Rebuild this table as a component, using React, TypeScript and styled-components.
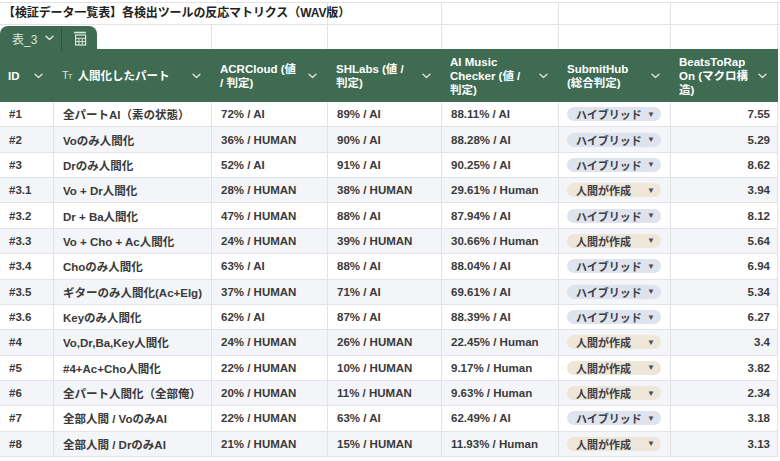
import React from "react";
import styled, { createGlobalStyle } from "styled-components";

const GlobalStyle = createGlobalStyle`
  html, body {
    margin: 0;
    padding: 0;
    background: #ffffff;
    overflow: hidden;
  }
  body {
    font-family: "Liberation Sans", "Noto Sans CJK JP", sans-serif;
    -webkit-font-smoothing: antialiased;
  }
`;

const COLS = "54px 158px 116px 114px 117px 112px 107px";
const GREEN = "#3e6b52";
const GRID = "#e1e3e6";

const Sheet = styled.div`
  width: 780px;
  padding-top: 2px;
`;

const PlainRow = styled.div<{ $h: number }>`
  display: grid;
  grid-template-columns: ${COLS};
  height: ${(p) => p.$h}px;
  border-top: 1px solid ${GRID};
  box-sizing: border-box;
`;

const PlainCell = styled.div<{ $span?: number }>`
  grid-column: span ${(p) => p.$span ?? 1};
  border-right: 1px solid ${GRID};
  position: relative;
  display: flex;
  align-items: flex-end;
`;

const Title = styled.div`
  font-size: 12px;
  font-weight: 700;
  color: #222;
  white-space: nowrap;
  padding: 0 0 5px 3px;
  letter-spacing: -0.1px;
`;

const Tab = styled.div`
  display: flex;
  align-items: center;
  height: 24px;
  width: 97px;
  background: ${GREEN};
  border-radius: 8px 8px 0 0;
  margin-bottom: -1px;
  color: #dbe6df;
`;

const TabName = styled.div`
  display: flex;
  align-items: center;
  gap: 8px;
  width: 62px;
  padding-left: 12px;
  box-sizing: border-box;
  height: 100%;
  border-right: 1px solid #2f5540;
  font-size: 12px;
  font-weight: 400;
`;

const TabIcon = styled.div`
  flex: 1;
  display: flex;
  justify-content: center;
  align-items: center;
`;

const Table = styled.div`
  display: grid;
  grid-template-columns: ${COLS};
`;

const HeadCell = styled.div`
  background: ${GREEN};
  height: 53px;
  display: flex;
  align-items: center;
  justify-content: space-between;
  padding: 0 8px 0 8px;
  box-sizing: border-box;
  color: #ffffff;
  font-size: 11.5px;
  font-weight: 700;
  line-height: 14px;
`;

const HeadLabel = styled.div`
  display: flex;
  align-items: center;
  gap: 6px;
`;

const TypeMark = styled.span`
  font-size: 11px;
  font-weight: 400;
  color: #d9e4dd;
  letter-spacing: -1px;
  small {
    font-size: 8px;
  }
`;

const Chevron = styled.svg`
  flex: none;
  width: 9px;
  height: 6px;
  margin-right: 3px;
`;

const Cell = styled.div<{ $alt: boolean; $right?: boolean }>`
  height: 25.36px;
  box-sizing: border-box;
  background: ${(p) => (p.$alt ? "#f4f5f8" : "#ffffff")};
  border-bottom: 1px solid ${GRID};
  border-right: 1px solid ${GRID};
  display: flex;
  align-items: center;
  justify-content: ${(p) => (p.$right ? "flex-end" : "flex-start")};
  padding: 0 ${(p) => (p.$right ? "7px" : "8px")} 0 9px;
  font-size: 11.5px;
  font-weight: 700;
  color: #3a3a3a;
  white-space: nowrap;
  overflow: hidden;
`;

const Chip = styled.div<{ $kind: "hybrid" | "human" }>`
  width: 94px;
  height: 14px;
  border-radius: 7px;
  background: ${(p) => (p.$kind === "hybrid" ? "#dfe3ee" : "#eee6d8")};
  display: flex;
  align-items: center;
  justify-content: space-between;
  padding: 0 6px 0 9px;
  box-sizing: border-box;
  font-size: 11px;
  font-weight: 700;
  color: #3c3f45;
  margin-left: -1px;
`;

const Caret = styled.span`
  font-size: 8px;
  color: #4a4d52;
`;

type Verdict = "hybrid" | "human";

interface Row {
  id: string;
  part: string;
  acr: string;
  sh: string;
  amc: string;
  hub: Verdict;
  btr: string;
}

const rows: Row[] = [
  { id: "#1", part: "全パートAI（素の状態）", acr: "72% / AI", sh: "89% / AI", amc: "88.11% / AI", hub: "hybrid", btr: "7.55" },
  { id: "#2", part: "Voのみ人間化", acr: "36% / HUMAN", sh: "90% / AI", amc: "88.28% / AI", hub: "hybrid", btr: "5.29" },
  { id: "#3", part: "Drのみ人間化", acr: "52% / AI", sh: "91% / AI", amc: "90.25% / AI", hub: "hybrid", btr: "8.62" },
  { id: "#3.1", part: "Vo + Dr人間化", acr: "28% / HUMAN", sh: "38% / HUMAN", amc: "29.61% / Human", hub: "human", btr: "3.94" },
  { id: "#3.2", part: "Dr + Ba人間化", acr: "47% / HUMAN", sh: "88% / AI", amc: "87.94% / AI", hub: "hybrid", btr: "8.12" },
  { id: "#3.3", part: "Vo + Cho + Ac人間化", acr: "24% / HUMAN", sh: "39% / HUMAN", amc: "30.66% / Human", hub: "human", btr: "5.64" },
  { id: "#3.4", part: "Choのみ人間化", acr: "63% / AI", sh: "88% / AI", amc: "88.04% / AI", hub: "hybrid", btr: "6.94" },
  { id: "#3.5", part: "ギターのみ人間化(Ac+Elg)", acr: "37% / HUMAN", sh: "71% / AI", amc: "69.61% / AI", hub: "hybrid", btr: "5.34" },
  { id: "#3.6", part: "Keyのみ人間化", acr: "62% / AI", sh: "87% / AI", amc: "88.39% / AI", hub: "hybrid", btr: "6.27" },
  { id: "#4", part: "Vo,Dr,Ba,Key人間化", acr: "24% / HUMAN", sh: "26% / HUMAN", amc: "22.45% / Human", hub: "human", btr: "3.4" },
  { id: "#5", part: "#4+Ac+Cho人間化", acr: "22% / HUMAN", sh: "10% / HUMAN", amc: "9.17% / Human", hub: "human", btr: "3.82" },
  { id: "#6", part: "全パート人間化（全部俺）", acr: "20% / HUMAN", sh: "11% / HUMAN", amc: "9.63% / Human", hub: "human", btr: "2.34" },
  { id: "#7", part: "全部人間 / VoのみAI", acr: "22% / HUMAN", sh: "63% / AI", amc: "62.49% / AI", hub: "hybrid", btr: "3.18" },
  { id: "#8", part: "全部人間 / DrのみAI", acr: "21% / HUMAN", sh: "15% / HUMAN", amc: "11.93% / Human", hub: "human", btr: "3.13" },
];

const Down: React.FC<{ color?: string }> = ({ color = "#d6e2da" }) => (
  <Chevron viewBox="0 0 9 6">
    <path d="M1 1.2 L4.5 4.6 L8 1.2" fill="none" stroke={color} strokeWidth="1.4" strokeLinecap="round" strokeLinejoin="round" />
  </Chevron>
);

const TableGlyph = () => (
  <svg width="14" height="15" viewBox="0 0 14 15">
    <path d="M1 1.5 H13" stroke="#dbe6df" strokeWidth="1.6" />
    <rect x="2.6" y="4" width="10" height="10" fill="none" stroke="#dbe6df" strokeWidth="1.2" />
    <path d="M2.6 7.3 H12.6 M2.6 10.6 H12.6 M5.9 7.3 V14 M9.3 7.3 V14" stroke="#dbe6df" strokeWidth="1" />
  </svg>
);

const headers: React.ReactNode[] = [
  "ID",
  <>
    <TypeMark>
      T<small>T</small>
    </TypeMark>
    人間化したパート
  </>,
  <>
    ACRCloud (値
    <br />/ 判定)
  </>,
  <>
    SHLabs (値 /
    <br />
    判定)
  </>,
  <>
    AI Music
    <br />
    Checker (値 /
    <br />
    判定)
  </>,
  <>
    SubmitHub
    <br />
    (総合判定)
  </>,
  <>
    BeatsToRap
    <br />
    On (マクロ構
    <br />
    造)
  </>,
];

const App: React.FC = () => {
  return (
    <>
      <GlobalStyle />
      <Sheet>
        <PlainRow $h={22}>
          <PlainCell $span={3}>
            <Title>【検証データ一覧表】各検出ツールの反応マトリクス（WAV版）</Title>
          </PlainCell>
          <PlainCell />
          <PlainCell />
          <PlainCell />
          <PlainCell />
        </PlainRow>
        <PlainRow $h={25}>
          <PlainCell $span={2}>
            <Tab>
              <TabName>
                表_3
                <Down color="#dbe6df" />
              </TabName>
              <TabIcon>
                <TableGlyph />
              </TabIcon>
            </Tab>
          </PlainCell>
          <PlainCell />
          <PlainCell />
          <PlainCell />
          <PlainCell />
          <PlainCell />
        </PlainRow>
        <Table>
          {headers.map((h, i) => (
            <HeadCell key={i}>
              <HeadLabel>{h}</HeadLabel>
              <Down />
            </HeadCell>
          ))}
          {rows.map((r, i) => {
            const alt = i % 2 === 1;
            return (
              <React.Fragment key={r.id}>
                <Cell $alt={alt}>{r.id}</Cell>
                <Cell $alt={alt}>{r.part}</Cell>
                <Cell $alt={alt}>{r.acr}</Cell>
                <Cell $alt={alt}>{r.sh}</Cell>
                <Cell $alt={alt}>{r.amc}</Cell>
                <Cell $alt={alt}>
                  <Chip $kind={r.hub}>
                    {r.hub === "hybrid" ? "ハイブリッド" : "人間が作成"}
                    <Caret>▼</Caret>
                  </Chip>
                </Cell>
                <Cell $alt={alt} $right>
                  {r.btr}
                </Cell>
              </React.Fragment>
            );
          })}
        </Table>
      </Sheet>
    </>
  );
};

export default App;
